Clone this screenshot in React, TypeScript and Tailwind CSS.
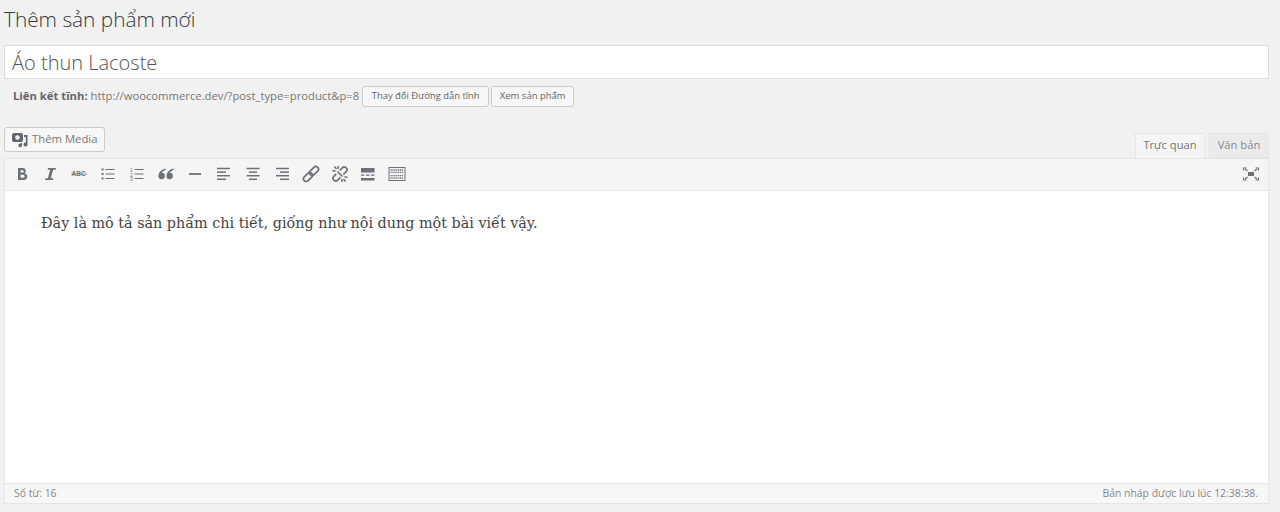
import React from "react";

const C = "#6b7177";

function Ic({ x, w = 18, children }: { x: number; w?: number; children: React.ReactNode }) {
  return (
    <span className="flex h-[18px] shrink-0 items-center justify-center" style={{ width: x }}>
      <svg width={w} height={18} viewBox={`0 0 ${w} 18`} fill="none" stroke={C} strokeWidth="1.2">
        {children}
      </svg>
    </span>
  );
}

function Lines({ rows }: { rows: [number, number][] }) {
  return (
    <>
      {rows.map(([a, b], i) => (
        <path key={i} d={`M${a} ${3.5 + i * 3.600}H${b}`} strokeWidth="1.500" />
      ))}
    </>
  );
}

function Toolbar() {
  return (
    <div className="flex h-[33px] items-center border border-[#e5e5e5] bg-[#f5f5f5] pb-[1px] pl-[2px] pr-[8px]">
      <div className="flex flex-1 items-center">
        <Ic x={29}>
          <path d="M5 3h5a3 3 0 0 1 1.600 5.400A3.300 3.300 0 0 1 10.400 15H5V3zm2.600 2.200v2.400h2a1.200 1.200 0 0 0 0-2.400h-2zm0 4.500v3.100h2.500a1.550 1.550 0 0 0 0-3.100H7.600z" fill={C} stroke="none" />
        </Ic>
        <Ic x={28.500}>
          <path d="M7 3h8l-.4 1.800h-2.500L9.800 13.200h2.500L11.900 15H4l.4-1.800h2.500L9.200 4.800H6.600z" fill={C} stroke="none" />
        </Ic>
        <Ic x={29}>
          <text x="1.500" y="11.300" fontFamily="Liberation Sans" fontSize="6.500" fontWeight="700" fill={C} stroke="none">ABC</text>
          <path d="M1 9h16" strokeWidth="0.600" />
        </Ic>
        <Ic x={29}>
          <path d="M2.500 4.500h2M2.500 9h2M2.500 13.500h2" strokeWidth="2" />
          <path d="M6.500 4.500h9M6.500 9h9M6.500 13.500h9" strokeWidth="1" />
        </Ic>
        <Ic x={29}>
          <text x="2" y="7" fontFamily="Liberation Sans" fontSize="5" fill={C} stroke="none">1</text>
          <text x="2" y="11.500" fontFamily="Liberation Sans" fontSize="5" fill={C} stroke="none">2</text>
          <text x="2" y="16" fontFamily="Liberation Sans" fontSize="5" fill={C} stroke="none">3</text>
          <path d="M6.500 4.500h9M6.500 9h9M6.500 13.500h9" strokeWidth="1" />
        </Ic>
        <Ic x={29}>
          <path d="M8.300 3.500C4.500 4.500 1.500 7.500 1.500 11a3.200 3.200 0 1 0 3.300-3.200C5.300 6.500 6.800 5.600 8.600 5zM16.300 3.500C12.500 4.500 9.500 7.500 9.500 11a3.200 3.200 0 1 0 3.300-3.200c.5-1.300 2-2.200 3.800-2.800z" fill={C} stroke="none" />
        </Ic>
        <Ic x={29}>
          <path d="M3 9h12" strokeWidth="1.800" />
        </Ic>
        <Ic x={29}><Lines rows={[[2, 15], [2, 11], [2, 15], [2, 11]]} /></Ic>
        <Ic x={29}><Lines rows={[[2.500, 15.500], [5, 13], [2.500, 15.500], [5, 13]]} /></Ic>
        <Ic x={28.500}><Lines rows={[[3, 16], [7, 16], [3, 16], [7, 16]]} /></Ic>
        <Ic x={29}>
          <g transform="rotate(-45 9 9)" strokeWidth="1.700">
            <rect x="-0.500" y="6.300" width="10.500" height="5.400" rx="2.700" />
            <rect x="8" y="6.300" width="10.500" height="5.400" rx="2.700" />
          </g>
        </Ic>
        <Ic x={29}>
          <g transform="rotate(-45 9 9)" strokeWidth="1.700">
            <path d="M6.500 6.300H3a2.700 2.700 0 0 0 0 5.400h4" />
            <path d="M11.500 6.300H15a2.700 2.700 0 0 1 0 5.400h-4" />
          </g>
          <path d="M3.500 1.500l2 2.500M1.500 5.500l3 .8M7 1l.3 2.800M14.500 16.500l-2-2.500M16.500 12.500l-3-.8M11 17l-.3-2.800M6.500 6.500l5 5" strokeWidth="1.500" />
        </Ic>
        <Ic x={28.500}>
          <path d="M2 3h13.500v4.500H2zM2 13h13.500v2.500H2z" fill={C} stroke="none" />
          <path d="M2 10.200h3.500M7 10.200h3.500M12 10.200h3.500" strokeWidth="1.300" />
        </Ic>
        <Ic x={29} w={20}>
          <rect x="2" y="2.500" width="16" height="13" strokeWidth="1" />
          <path d="M3.500 5h13M3.500 7.300h13M3.500 10.700h13M3.500 13h13" strokeWidth="1.300" strokeDasharray="1.200 .7" />
        </Ic>
      </div>
      <Ic x={18}>
        <rect x="6" y="7" width="6" height="4" fill={C} stroke="none" />
        <path d="M3 4l2.500 2M15 4l-2.500 2M3 14l2.500-2M15 14l-2.500-2" strokeWidth="1.200" />
        <path d="M1.500 5.500V3h3M16.500 5.500V3h-3M1.500 12.500V15h3M16.500 12.500V15h-3" strokeWidth="1.100" />
      </Ic>
    </div>
  );
}

export default function App() {
  return (
    <div
      className="flex h-[512px] w-[1280px] flex-col overflow-hidden bg-[#f1f1f1] pl-[4px] pr-[11px] text-[#777]"
      style={{ fontFamily: '"Open Sans", sans-serif' }}
    >
      <h1 className="mt-[6px] h-[26px] text-[20.800px] leading-[26px] font-light text-[#32373c]">Thêm sản phẩm mới</h1>

      <div className="mt-[13px] flex h-[34px] items-center border border-[#ddd] bg-white pl-[7px] pt-[2px] text-[20px] font-light text-[#555]">
        Áo thun Lacoste
      </div>

      <div className="mt-[7px] flex h-[21px] items-center pl-[9px] text-[11.270px]">
        <span className="font-bold text-[#666]">Liên kết tĩnh:</span>
        <span className="ml-[3px] mr-[1px] text-[#777]">http://woocommerce.dev/?post_type=product&amp;p=8</span>
        <span className="ml-[2px] flex h-[21px] w-[127px] items-center justify-center rounded-[3px] border border-[#ccc] bg-[#f7f7f7] text-[9.400px] text-[#666]">Thay đổi Đường dẫn tĩnh</span>
        <span className="ml-[2px] flex h-[21px] w-[83px] items-center justify-center rounded-[3px] border border-[#ccc] bg-[#f7f7f7] text-[9.500px] text-[#666]">Xem sản phẩm</span>
      </div>

      <div className="mt-[20px] flex h-[31px] items-start justify-between">
        <span className="flex h-[25px] w-[101px] items-center rounded-[3px] border border-[#ccc] bg-[#f7f7f7] pl-[6px] text-[11.300px] text-[#777]">
          <svg width="18" height="18" viewBox="0 0 18 18" className="mr-[3px]" fill="#606770">
            <path d="M3 2h7a2 2 0 0 1 2 2v5a2 2 0 0 1-2 2H3a2 2 0 0 1-2-2V4a2 2 0 0 1 2-2zm3.500 2.200a2.300 2.300 0 1 0 0 4.600 2.300 2.300 0 0 0 0-4.600z" fillRule="evenodd" />
            <path d="M13 4h3.500v9.500a2 2 0 1 1-1.600-1.900V6H13zM11 12v2.500a1.800 1.800 0 1 1-1.500-1.800V12z" />
          </svg>
          Thêm Media
        </span>
        <div className="mt-[6px] flex items-end">
          <span className="z-10 flex h-[25px] w-[70px] items-center justify-center border border-[#e5e5e5] border-b-0 bg-[#f5f5f5] pb-[2px] text-[11.200px] text-[#777]">Trực quan</span>
          <span className="ml-[4px] flex h-[25px] w-[60px] items-center justify-center border border-[#e5e5e5] bg-[#ebebeb] text-[11.200px] text-[#888]">Văn bản</span>
        </div>
      </div>

      <Toolbar />

      <div
        className="h-[292px] border-x border-[#e5e5e5] bg-white pl-[36px] pt-[21px] text-[14.350px] leading-[22px] text-[#444]"
        style={{ fontFamily: '"DejaVu Serif", serif' }}
      >
        Đây là mô tả sản phẩm chi tiết, giống như nội dung một bài viết vậy.
      </div>

      <div className="flex h-[21px] items-center justify-between border border-[#e5e5e5] bg-[#f7f7f7] pl-[9px] pr-[10px] text-[10.400px] text-[#888]">
        <span>Số từ: 16</span>
        <span>Bản nháp được lưu lúc 12:38:38.</span>
      </div>
    </div>
  );
}
